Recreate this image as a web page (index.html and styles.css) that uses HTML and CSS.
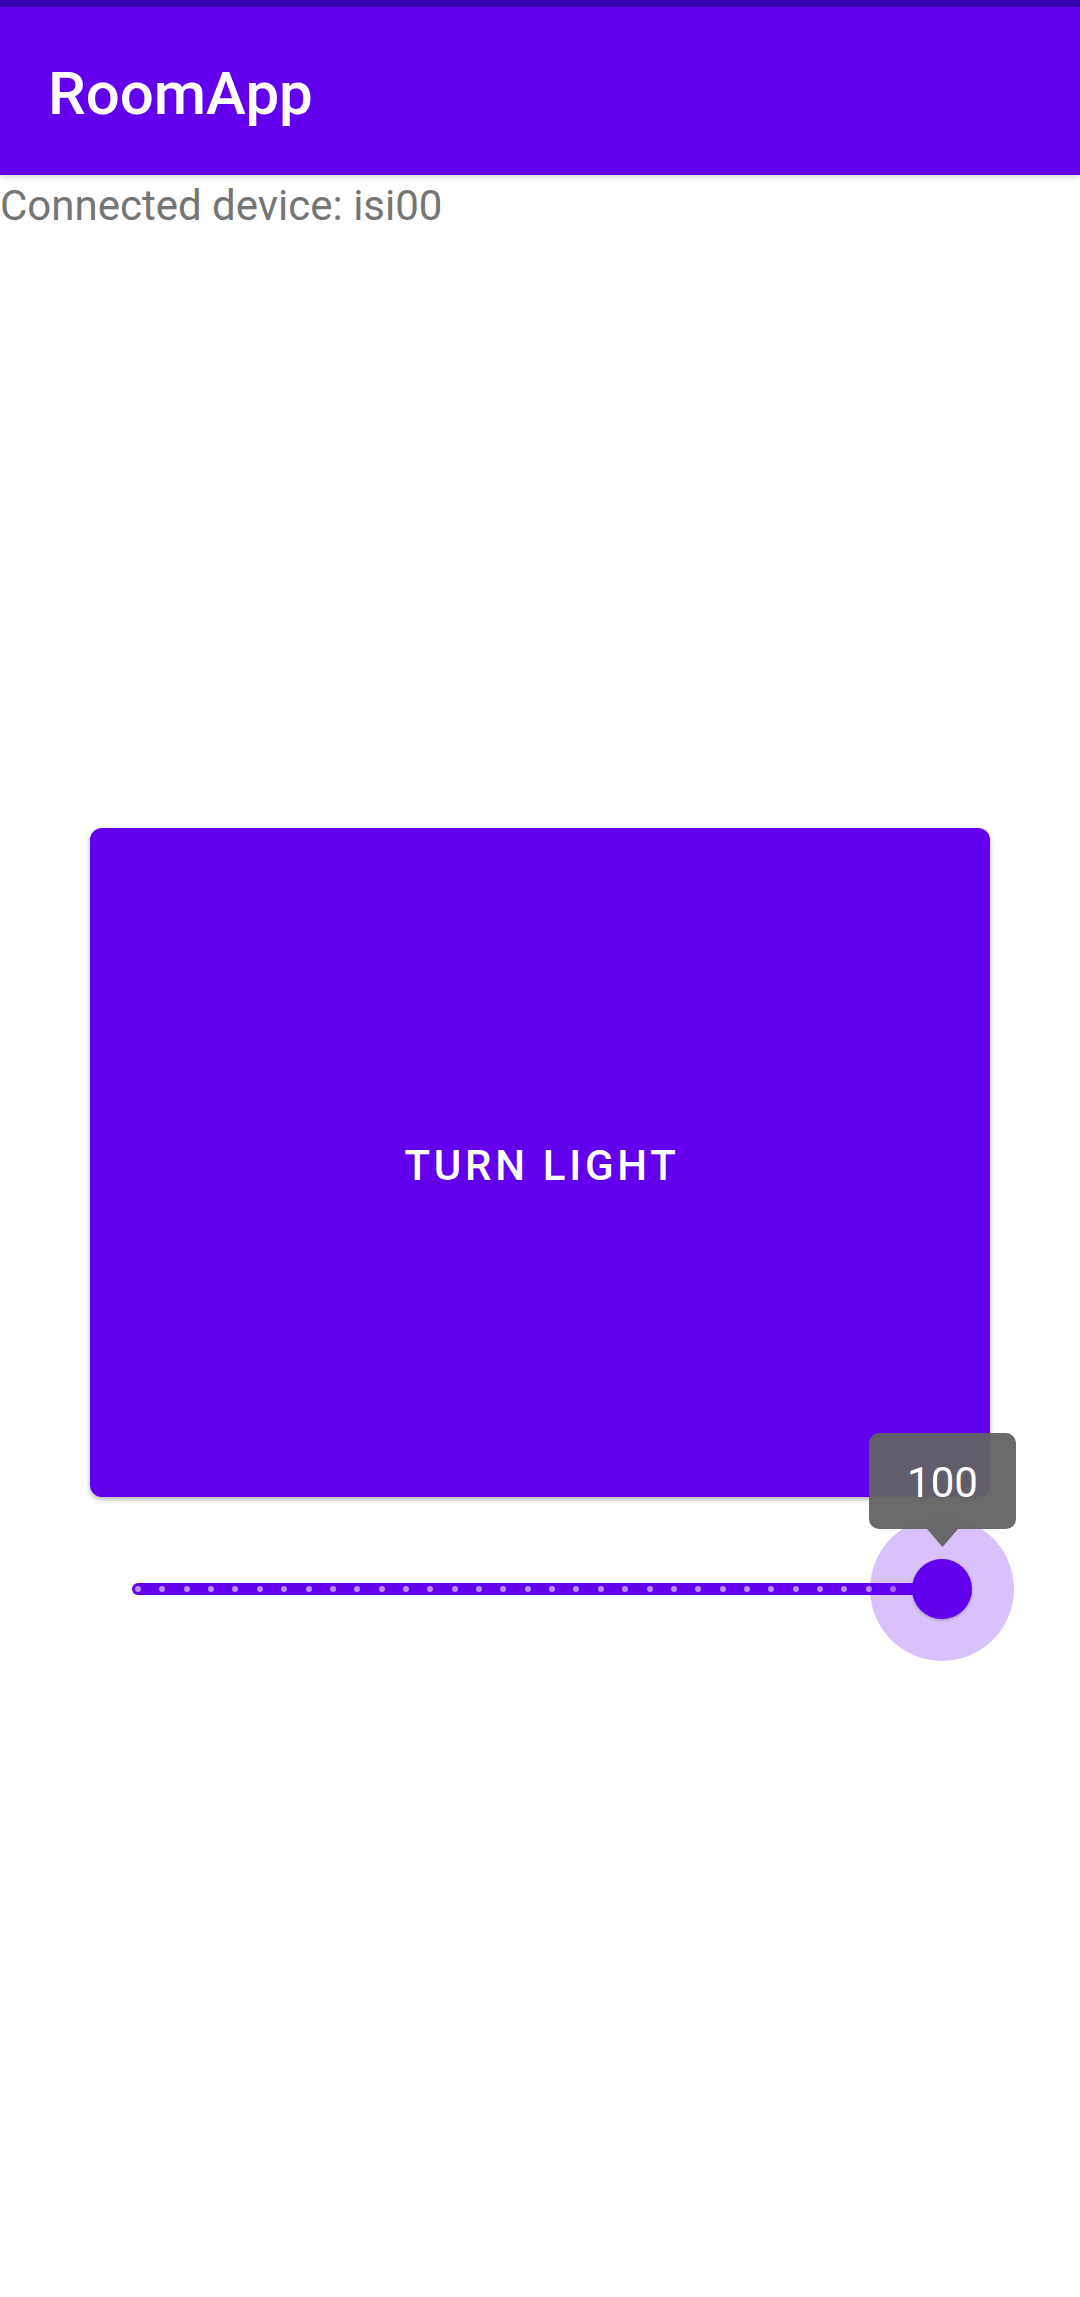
FILE: index.html
```html
<!DOCTYPE html>
<html>
<head>
<meta charset="utf-8">
<link rel="stylesheet" href="styles.css">
</head>
<body>
<div class="screen">
  <div class="statusbar"></div>
  <header class="appbar"><h1 class="title">RoomApp</h1></header>
  <p class="device">Connected device: isi00</p>
  <button class="light-btn">Turn light</button>
  <div class="slider">
    <div class="track">
      <span class="tick"></span><span class="tick"></span><span class="tick"></span><span class="tick"></span>
      <span class="tick"></span><span class="tick"></span><span class="tick"></span><span class="tick"></span>
      <span class="tick"></span><span class="tick"></span><span class="tick"></span><span class="tick"></span>
      <span class="tick"></span><span class="tick"></span><span class="tick"></span><span class="tick"></span>
      <span class="tick"></span><span class="tick"></span><span class="tick"></span><span class="tick"></span>
      <span class="tick"></span><span class="tick"></span><span class="tick"></span><span class="tick"></span>
      <span class="tick"></span><span class="tick"></span><span class="tick"></span><span class="tick"></span>
      <span class="tick"></span><span class="tick"></span><span class="tick"></span><span class="tick"></span>
      <span class="tick"></span><span class="tick"></span>
    </div>
    <div class="halo"></div>
    <div class="thumb"></div>
    <div class="tooltip">100</div>
  </div>
</div>
</body>
</html>
```
FILE: styles.css
```css
html, body {
  margin: 0;
  padding: 0;
  background: #ffffff;
}
.screen {
  width: 1080px;
  height: 2297px;
  overflow: hidden;
  font-family: Roboto, "Liberation Sans", sans-serif;
  background: #ffffff;
}
.statusbar {
  height: 7px;
  background: #3a00b2;
}
.appbar {
  position: relative;
  z-index: 2;
  height: 168px;
  box-sizing: border-box;
  padding: 57px 0 0 48px;
  background: #6200ee;
  box-shadow: 0 2px 6px rgba(0, 0, 0, 0.18);
}
.title {
  margin: 0;
  font-size: 60px;
  line-height: 60px;
  font-weight: 500;
  color: #ffffff;
}
.device {
  margin: 6px 0 0 0;
  font-size: 42px;
  line-height: 50px;
  color: #757575;
  font-weight: 400;
}
.light-btn {
  display: flex;
  align-items: center;
  justify-content: center;
  margin: 597px 0 0 90px;
  width: 900px;
  height: 669px;
  padding: 6px 0 0 4px;
  border: none;
  border-radius: 12px;
  background: #6200ee;
  color: #ffffff;
  font-family: Roboto, "Liberation Sans", sans-serif;
  font-size: 42px;
  font-weight: 500;
  letter-spacing: 3.75px;
  text-transform: uppercase;
  box-shadow: 0 3px 4px rgba(0, 0, 0, 0.2), 0 1px 8px rgba(0, 0, 0, 0.1);
}
.slider {
  position: relative;
  box-sizing: border-box;
  height: 144px;
  margin-top: 20px;
  padding-top: 66px;
}
.track {
  display: flex;
  justify-content: space-between;
  align-items: center;
  box-sizing: border-box;
  margin-left: 132px;
  width: 816px;
  height: 12px;
  padding: 0 3px;
  border-radius: 6px;
  background: #6200ee;
}
.tick {
  width: 6px;
  height: 6px;
  border-radius: 50%;
  background: #b98af8;
}
.halo {
  position: absolute;
  left: 870px;
  top: 0;
  width: 144px;
  height: 144px;
  border-radius: 50%;
  background: rgba(98, 0, 238, 0.24);
}
.thumb {
  position: absolute;
  left: 912px;
  top: 42px;
  width: 60px;
  height: 60px;
  border-radius: 50%;
  background: #6200ee;
  box-shadow: 0 1px 3px rgba(0, 0, 0, 0.3);
}
.tooltip {
  position: absolute;
  left: 869px;
  top: -84px;
  width: 147px;
  height: 93px;
  padding-top: 3px;
  border-radius: 10px;
  background: rgba(98, 98, 98, 0.95);
  color: #ffffff;
  font-size: 42px;
  line-height: 93px;
  text-align: center;
}
.tooltip::after {
  content: "";
  position: absolute;
  left: 58px;
  top: 96px;
  width: 31px;
  height: 18px;
  background: rgba(98, 98, 98, 0.95);
  clip-path: polygon(0 0, 100% 0, 50% 100%);
}
```
